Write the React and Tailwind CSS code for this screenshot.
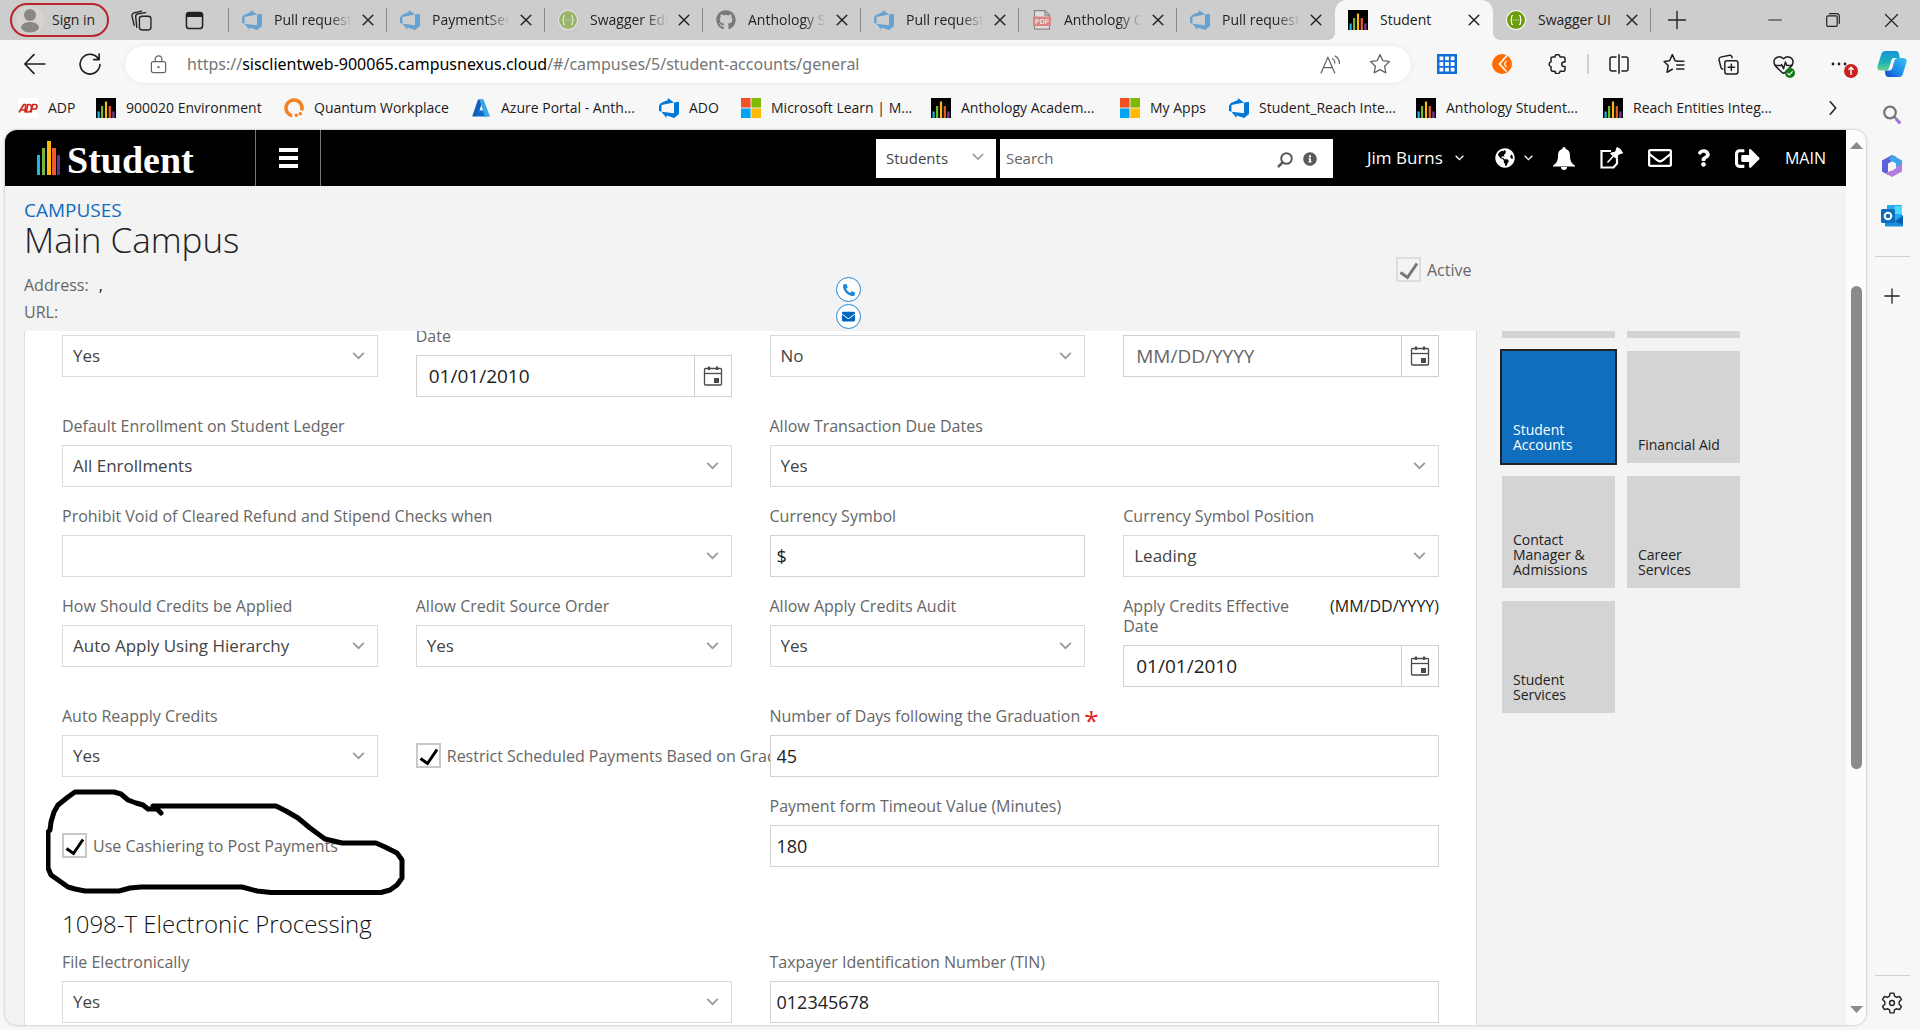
import { useId } from 'react';
import { FaGithub, FaGlobeAmericas, FaRegEnvelope, FaQuestion, FaSignOutAlt, FaInfoCircle, FaPhoneAlt, FaEnvelope } from 'react-icons/fa';
import { HeartPulse } from 'lucide-react';

/* ---------- Brand icons ---------- */

function DevOpsIcon() {
    return (
        <svg viewBox="0 0 24 24" className="h-5 w-5" fill="#0078d7">
            <path d="M0 8.877 2.247 5.91l8.405-3.416V.022l7.37 5.393L2.966 8.338v8.225L0 15.707zm24-4.45v14.651l-5.753 4.9-9.303-3.057v3.056l-5.978-7.416 15.057 1.798V5.415z" />
        </svg>
    );
}

function SwaggerIcon() {
    return (
        <svg viewBox="0 0 20 20" className="h-5 w-5">
            <circle cx="10" cy="10" r="10" fill="#fff" />
            <circle cx="10" cy="10" r="9" fill="#6a9c0c" />
            <path d="M7 5.5c-1.600 0-1.400 1-1.400 2.300S5 10 4.300 10c.7 0 1.300.6 1.300 2s-.2 2.500 1.400 2.500M13 5.500c1.600 0 1.400 1 1.400 2.300S15 10 15.700 10c-.7 0-1.300.6-1.300 2s.2 2.500-1.400 2.500" fill="none" stroke="#fff" strokeWidth="1.200" />
            <path d="M7.300 10h1M9.500 10h1M11.700 10h1" stroke="#fff" strokeWidth="1.200" />
        </svg>
    );
}

function GithubIcon() {
    return <FaGithub className="h-5 w-5 text-[#24292f]" />;
}

function PdfIcon() {
    return (
        <svg viewBox="0 0 20 20" className="h-5 w-5">
            <path d="M2.500.7h10.500l4.500 4.500v14h-15z" fill="#eee" stroke="#444" strokeWidth="1.200" />
            <path d="M13 .7v4.500h4.500" fill="none" stroke="#444" strokeWidth="1.200" />
            <rect x="1" y="6.500" width="18" height="9.500" rx="1" fill="#e8403c" />
            <text x="10" y="13.800" textAnchor="middle" fontSize="7" fontWeight="700" fill="#fff" fontFamily="Liberation Sans, sans-serif">PDF</text>
        </svg>
    );
}

function AnthologyIcon() {
    return (
        <svg viewBox="0 0 20 20" className="h-5 w-5">
            <rect width="20" height="20" fill="#000" />
            <rect x="1.500" y="13.500" width="2.200" height="6.500" fill="#1cb5ea" />
            <rect x="5" y="8" width="2.200" height="12" fill="#7ab827" />
            <rect x="8.900" y="3.500" width="2.200" height="16.500" fill="#fdb913" />
            <rect x="12.700" y="8" width="2.200" height="12" fill="#f15a24" />
            <rect x="16.300" y="13.500" width="2.200" height="6.500" fill="#7b3f98" />
        </svg>
    );
}

function AdpIcon() {
    return (
        <svg viewBox="0 0 20 20" className="h-5 w-5">
            <rect width="20" height="20" fill="#fff" />
            <g fill="none" stroke="#d0271d" strokeWidth="1.700" strokeLinejoin="round">
                <path d="M1 14.500 5.800 6.500h2L6.900 14.500M3.500 12h3.500" />
                <path d="M8.300 14 9.800 6.500h1.700c3 0 2.500 7.500-1.200 7.500z" />
                <path d="M13 14.500l1.700-8h2.600c2.600 0 2 4.500-.8 4.500h-1.800" />
            </g>
        </svg>
    );
}

function QuantumIcon() {
    return (
        <svg viewBox="0 0 20 20" className="h-5 w-5">
            <path d="M8.200 17.800A8 8 0 1 1 17.600 12.500" fill="none" stroke="#f58220" strokeWidth="3.600" />
            <circle cx="12.300" cy="17.300" r="1.700" fill="#f58220" />
            <circle cx="16.300" cy="15.800" r="1.800" fill="#f58220" />
        </svg>
    );
}

function AzureIcon() {
    return (
        <svg viewBox="0 0 20 20" className="h-5 w-5">
            <path d="M7 1.500h5L6.500 18.500H1.200z" fill="#0f5fb8" />
            <path d="M5 12.500h9l2 6H6.500z" fill="#0b6cc9" />
            <path d="M8.500 1.500h4L19 18.500h-5.300z" fill="#37a6ea" />
        </svg>
    );
}

function MicrosoftIcon() {
    return (
        <svg viewBox="0 0 20 20" className="h-5 w-5">
            <rect width="20" height="20" fill="#e8e8e8" />
            <rect width="9.500" height="9.500" fill="#f25022" />
            <rect x="10.500" width="9.500" height="9.500" fill="#7fba00" />
            <rect y="10.500" width="9.500" height="9.500" fill="#00a4ef" />
            <rect x="10.500" y="10.500" width="9.500" height="9.500" fill="#ffb900" />
        </svg>
    );
}

/* ---------- Line icons ---------- */

function Line({ size = 20, width = 1.4, className = '', children }) {
    return (
        <svg
            viewBox="0 0 20 20"
            width={size}
            height={size}
            fill="none"
            stroke="currentColor"
            strokeWidth={width}
            strokeLinecap="round"
            strokeLinejoin="round"
            className={className}
        >
            {children}
        </svg>
    );
}

function Chevron({ className }) {
    return (
        <svg viewBox="0 0 14 9" fill="none" stroke="currentColor" strokeWidth="2" className={className}>
            <path d="M1 1l6 6 6-6" />
        </svg>
    );
}

function CalendarIcon() {
    return (
        <svg viewBox="0 0 20 20" className="h-5 w-5" fill="none" stroke="#4a4a4a" strokeWidth="1.300">
            <rect x="1.500" y="2.500" width="17" height="16.500" rx="1" />
            <path d="M1.500 7.500h17" />
            <path d="M6 .5v3.500M14 .5v3.500" strokeWidth="2.200" />
            <rect x="11" y="12" width="5" height="5" fill="#4a4a4a" stroke="none" />
        </svg>
    );
}

/* ---------- Browser chrome ---------- */

const TABS = [
    { title: 'Pull request 12', icon: DevOpsIcon },
    { title: 'PaymentService', icon: DevOpsIcon },
    { title: 'Swagger Editor', icon: SwaggerIcon },
    { title: 'Anthology Stu', icon: GithubIcon },
    { title: 'Pull request 14', icon: DevOpsIcon },
    { title: 'Anthology Con', icon: PdfIcon },
    { title: 'Pull request 15', icon: DevOpsIcon },
    { title: 'Student', icon: AnthologyIcon, active: true },
    { title: 'Swagger UI', icon: SwaggerIcon, loaded: true },
];

function Tab({ title, icon: Icon, active, loaded, divider }) {
    const bright = active || loaded;
    return (
        <div className={`relative flex h-10 w-[158px] shrink-0 items-center pl-[13px] ${active ? 'rounded-t-xl bg-[#f7f7f7]' : ''}`}>
            {active && (
                <>
                    <span className="absolute -left-2 bottom-0 h-2 w-2 bg-[radial-gradient(circle_at_0_0,transparent_8px,#f7f7f7_8px)]" />
                    <span className="absolute -right-2 bottom-0 h-2 w-2 bg-[radial-gradient(circle_at_100%_0,transparent_8px,#f7f7f7_8px)]" />
                </>
            )}
            <span className={bright ? '' : 'opacity-50'}>
                <Icon />
            </span>
            <span
                className={`ml-3 w-[78px] overflow-hidden whitespace-nowrap text-sm ${bright ? '' : '[mask-image:linear-gradient(to_right,black_70%,transparent)]'}`}
            >
                {title}
            </span>
            <button className="ml-1.5 flex h-5 w-5 items-center justify-center" aria-label={`Close ${title}`}>
                <Line size={16} width={1.8}>
                    <path d="M4 4l12 12M16 4L4 16" />
                </Line>
            </button>
            {divider && <span className="absolute right-0 top-2 h-6 w-px bg-[#8c8c8c]" />}
        </div>
    );
}

function TabStrip() {
    return (
        <div className="flex h-10 shrink-0 items-center bg-[#cdcdcd]">
            <button className="ml-2.5 flex h-[34px] w-[99px] items-center gap-2 rounded-full border-2 border-[#b9252b] pl-1 text-sm">
                <svg viewBox="0 0 28 28" className="h-7 w-7">
                    <circle cx="14" cy="14" r="14" fill="#d6d3cd" />
                    <circle cx="14" cy="9" r="6" fill="#8a8784" />
                    <path d="M5 22c0-8 18-8 18 0-3 6-15 6-18 0z" fill="#8a8784" />
                </svg>
                Sign in
            </button>
            <button className="ml-[22px]" aria-label="Workspaces">
                <Line size={21} width={1.3}>
                    <rect x="8" y="6" width="11" height="13" rx="2.500" />
                    <path d="M5.500 16.500 4.500 6.500Q4.300 4 6.500 3.600L14 2.500" />
                    <path d="M3 14.500 1 6Q.6 3.500 2.800 2.800L10 1" />
                </Line>
            </button>
            <button className="ml-[33px]" aria-label="Tab actions">
                <Line size={19} width={1.6}>
                    <rect x="1.500" y="1.500" width="17" height="17" rx="3" />
                    <path d="M2 4h16M2 2.800h16M2 5.300h16" strokeWidth="2" />
                </Line>
            </button>
            <span className="ml-6 h-6 w-px bg-[#8c8c8c]" />
            {TABS.map((tab, i) => (
                <Tab key={i} {...tab} divider={!tab.active && i !== 6} />
            ))}
            <button className="ml-3.5 flex h-6 w-6 items-center justify-center" aria-label="New tab">
                <Line size={20}>
                    <path d="M10 1.500v17M1.500 10h17" />
                </Line>
            </button>
            <div className="ml-auto flex">
                <button className="flex h-10 w-[58px] items-center justify-center" aria-label="Minimize">
                    <Line size={14}>
                        <path d="M1 10h18" />
                    </Line>
                </button>
                <button className="flex h-10 w-[58px] items-center justify-center" aria-label="Restore">
                    <Line size={14} width={1.7}>
                        <rect x="1" y="4" width="15" height="15" rx="2" />
                        <path d="M5 1h10q4 0 4 4v10" />
                    </Line>
                </button>
                <button className="flex h-10 w-[58px] items-center justify-center" aria-label="Close window">
                    <Line size={15} width={1.6}>
                        <path d="M2 2l16 16M18 2L2 18" />
                    </Line>
                </button>
            </div>
        </div>
    );
}

function ToolButton({ label, children }) {
    return (
        <button className="relative flex h-10 w-[55px] shrink-0 items-center justify-center" aria-label={label}>
            {children}
        </button>
    );
}

function Toolbar() {
    return (
        <div className="flex h-12 items-center text-[#1f1f1f]">
            <button className="ml-6" aria-label="Back">
                <Line size={22} width={1.5}>
                    <path d="M1 10h18M9 1.500.8 10 9 18.500" />
                </Line>
            </button>
            <button className="ml-[33px] mr-6" aria-label="Refresh">
                <Line size={22} width={1.5}>
                    <path d="M18 6A9 9 0 1 0 19 10.500M18.300 1v5h-5" />
                </Line>
            </button>
            <div className="flex h-[37px] min-w-0 flex-1 items-center rounded-full bg-white pl-6 pr-5 text-[#666] shadow-[0_0_4px_rgba(0,0,0,0.080)]">
                <Line size={19} width={1.3} className="shrink-0">
                    <rect x="2.500" y="7" width="15" height="11.500" rx="2" />
                    <path d="M6.500 7V4.500a3.500 3.500 0 0 1 7 0V7" />
                    <circle cx="10" cy="12.700" r=".6" fill="currentColor" />
                </Line>
                <p className="ml-[19px] flex-1 overflow-hidden whitespace-nowrap font-['Noto_Sans',sans-serif] text-base text-[#767676]">
                    https://<span className="text-black">sisclientweb-900065.campusnexus.cloud</span>/#/campuses/5/student-accounts/general
                </p>
                <button className="mr-7" aria-label="Read aloud">
                    <Line size={21} width={1.2}>
                        <path d="M1 18 7.500 3 14 18M3.300 13h8.400M12 4.500c1.500.8 2.200 2.200 2.200 4M14.500 2c2.500 1.300 4 4 4 7" />
                    </Line>
                </button>
                <button aria-label="Add to favorites">
                    <Line size={22} width={1.2}>
                        <path d="M10 1.500l2.600 5.500 6 .8-4.400 4.200 1.100 6L10 15.100 4.700 18l1.100-6L1.400 7.800l6-.8z" />
                    </Line>
                </button>
            </div>
            <div className="ml-2 flex shrink-0 items-center">
                <ToolButton label="Apps">
                    <svg viewBox="0 0 20 20" className="h-5 w-5">
                        <rect width="20" height="20" fill="#0f6fd6" />
                        <g fill="#fff">
                            <path d="M2.500 2.500h3.800v3.800H2.500zM8.100 2.500h3.800v3.800H8.100zM13.700 2.500h3.800v3.800h-3.800zM2.500 8.100h3.800v3.800H2.500zM8.100 8.100h3.800v3.800H8.100zM13.700 8.100h3.800v3.800h-3.800zM2.500 13.700h3.800v3.800H2.500zM8.100 13.700h3.800v3.800H8.100zM13.700 13.700h3.800v3.800h-3.800z" />
                        </g>
                    </svg>
                </ToolButton>
                <ToolButton label="Postman">
                    <svg viewBox="0 0 20 20" className="h-5 w-5">
                        <circle cx="10" cy="10" r="10" fill="#ff6c00" />
                        <path d="M15 1.500 7.500 10l7 7.500" fill="none" stroke="#fff" strokeWidth="1.700" />
                        <path d="M14.500 7q-3.500 3 0 6" fill="none" stroke="#fff" strokeWidth="1.200" />
                    </svg>
                </ToolButton>
                <ToolButton label="Extensions">
                    <Line size={20} width={1.5}>
                        <path d="M8 3a2.500 2.500 0 0 1 5 0h3.500q1.500 0 1.500 1.500V8h-1a2.300 2.300 0 0 0 0 4.600h1v3.200q0 1.500-1.500 1.500H13a2.500 2.500 0 0 1-5 0H5.500Q4 17.300 4 15.800v-3a2.600 2.600 0 0 1 0-5V4.500Q4 3 5.500 3z" />
                    </Line>
                </ToolButton>
                <span className="ml-[3px] mr-0.5 h-5 w-0.5 bg-[#d0d0d0]" />
                <ToolButton label="Split screen">
                    <Line size={20} width={1.5}>
                        <path d="M10 .8v18.400M7 3H3Q1 3 1 5v10q0 2 2 2h4M13 3h4q2 0 2 2v10q0 2-2 2h-4" />
                    </Line>
                </ToolButton>
                <ToolButton label="Favorites">
                    <Line size={22}>
                        <path d="M13 7.500 11 7 8.500 1.500 6 7l-5 .7 3.700 3.700L3.700 17.500l4.800-2.700M13.500 7.500H19M12.500 11H19M12.500 14.500H19" />
                    </Line>
                </ToolButton>
                <ToolButton label="Collections">
                    <Line size={21}>
                        <rect x="6.500" y="6.500" width="12.500" height="12.500" rx="2" />
                        <path d="M12.700 9.700v6M9.700 12.700h6M4.500 14.500Q3 14 2.700 12.500L1 5.500Q.8 3.500 2.500 3L11 1.200q2-.2 2.500 2.300" />
                    </Line>
                </ToolButton>
                <ToolButton label="Browser essentials">
                    <HeartPulse size={23} strokeWidth={1.600} />
                    <svg viewBox="0 0 10 10" className="absolute right-4 top-6 h-2.5 w-2.5">
                        <circle cx="5" cy="5" r="5" fill="#0f7b10" />
                        <path d="M2.500 5.200l1.800 1.800 3.400-3.600" fill="none" stroke="#fff" strokeWidth="1.200" />
                    </svg>
                </ToolButton>
                <ToolButton label="Settings and more">
                    <svg viewBox="0 0 16 4" className="h-1 w-4" fill="#1f1f1f">
                        <circle cx="2" cy="2" r="1.400" />
                        <circle cx="8" cy="2" r="1.400" />
                        <circle cx="14" cy="2" r="1.400" />
                    </svg>
                    <svg viewBox="0 0 14 14" className="absolute right-2 top-5 h-3.5 w-3.5">
                        <circle cx="7" cy="7" r="7" fill="#c9211e" />
                        <path d="M7 11V3.500M4.500 5.800 7 3.300l2.500 2.500" fill="none" stroke="#fff" strokeWidth="1.400" />
                    </svg>
                </ToolButton>
            </div>
        </div>
    );
}

const BOOKMARKS = [
    { label: 'ADP', icon: AdpIcon, width: 'w-[78px]' },
    { label: '900020 Environment', icon: AnthologyIcon, width: 'w-[188px]' },
    { label: 'Quantum Workplace', icon: QuantumIcon, width: 'w-[187px]' },
    { label: 'Azure Portal - Anth...', icon: AzureIcon, width: 'w-[188px]' },
    { label: 'ADO', icon: DevOpsIcon, width: 'w-[82px]' },
    { label: 'Microsoft Learn | M...', icon: MicrosoftIcon, width: 'w-[190px]' },
    { label: 'Anthology Academ...', icon: AnthologyIcon, width: 'w-[189px]' },
    { label: 'My Apps', icon: MicrosoftIcon, width: 'w-[109px]' },
    { label: 'Student_Reach Inte...', icon: DevOpsIcon, width: 'w-[187px]' },
    { label: 'Anthology Student...', icon: AnthologyIcon, width: 'w-[187px]' },
    { label: 'Reach Entities Integ...', icon: AnthologyIcon, width: 'w-[187px]' },
];

function BookmarksBar() {
    return (
        <nav className="flex h-[42px] items-center pb-0.5 pl-[18px]">
            {BOOKMARKS.map(({ label, icon: Icon, width }, i) => (
                <a key={i} href="#" className={`flex shrink-0 items-center gap-2.5 whitespace-nowrap text-sm text-[#1b1b1b] ${width}`}>
                    <Icon />
                    {label}
                </a>
            ))}
            <button className="ml-auto mr-6" aria-label="More bookmarks">
                <Line size={18} width={1.7}>
                    <path d="M7 3l6 7-6 7" />
                </Line>
            </button>
        </nav>
    );
}

function EdgeSidebar() {
    return (
        <aside className="flex w-[54px] shrink-0 flex-col items-center pb-4 pr-0.5">
            <button className="flex h-12 items-center" aria-label="Copilot">
                <svg viewBox="0 0 30 28" className="h-7 w-[30px]">
                    <defs>
                        <linearGradient id="cp1" x1="0" y1="0" x2="0" y2="1">
                            <stop offset="0" stopColor="#1694d8" />
                            <stop offset=".6" stopColor="#1fb3b8" />
                            <stop offset="1" stopColor="#6fd08a" />
                        </linearGradient>
                        <linearGradient id="cp2" x1="1" y1="0" x2="0" y2="1">
                            <stop offset="0" stopColor="#35c5f2" />
                            <stop offset=".6" stopColor="#1c86ea" />
                            <stop offset="1" stopColor="#1743c4" />
                        </linearGradient>
                    </defs>
                    <path d="M8 1h11q2.500 0 3 3l.8 4H17q-2 0-2.600 2L12 18q-.8 2.500-3 2.500H3Q-.5 20 .6 16L4.500 3.500Q5.300 1 8 1z" fill="url(#cp1)" />
                    <path d="M21 8h5q4.500.3 3.500 4L25.700 24.500Q25 27 22 27H11.500Q9 27 8.300 24L7.800 20.500H12q2.600 0 3.400-2.500l2.300-8Q18.500 8 21 8z" fill="url(#cp2)" />
                </svg>
            </button>
            <button className="mt-4 flex h-[22px] items-center" aria-label="Search">
                <svg viewBox="0 0 20 20" className="h-5 w-5" fill="none">
                    <circle cx="8" cy="7.500" r="5.800" stroke="#777" strokeWidth="2.200" />
                    <path d="M12.500 12l2 2" stroke="#777" strokeWidth="2.200" />
                    <path d="M14.200 14l4 4.500" stroke="#a374d5" strokeWidth="3.200" />
                </svg>
            </button>
            <button className="mt-[29px]" aria-label="Microsoft 365">
                <svg viewBox="0 0 22 22" className="h-[22px] w-[22px]">
                    <path d="M11 0 1 5.500v11L7 20V9l4.500-3 4-4z" fill="#5b62d8" />
                    <path d="M11 0l10 5.500v10L15 12V8.500L7.500 4.500z" fill="#3fa5ea" />
                    <path d="M21 8v8.500L11 22l-7-4 7-2.500 4-3z" fill="#b57be0" />
                    <path d="M11 6.500l4 2.200v4.600l-4 2.200-4-2.200V8.700z" fill="#f7f7f7" />
                </svg>
            </button>
            <button className="mt-7" aria-label="Outlook">
                <svg viewBox="0 0 22 22" className="h-[22px] w-[22px]">
                    <rect x="6" y="0" width="15" height="18" rx="1" fill="#28a8ea" />
                    <rect x="13.500" y="1" width="7.500" height="8" fill="#50d9ff" />
                    <path d="M4 21.500V13l9 3 9-6v10.500q0 1-1 1z" fill="#1490df" />
                    <path d="M14 16.500 22 11v9z" fill="#0a5fb0" />
                    <rect x="0" y="4" width="14" height="14" rx="1.500" fill="#0f6cbd" />
                    <circle cx="7" cy="11" r="3.300" fill="none" stroke="#fff" strokeWidth="2" />
                </svg>
            </button>
            <span className="mt-[29px] h-px w-[35px] bg-[#d0d0d0]" />
            <button className="mt-[31px]" aria-label="Customize sidebar">
                <Line size={16} width={1.6}>
                    <path d="M10 1v18M1 10h18" />
                </Line>
            </button>
            <span className="mt-auto h-px w-[35px] bg-[#d0d0d0]" />
            <button className="mt-4" aria-label="Settings">
                <Line size={22} width={1.3}>
                    <path d="M8.300 1h3.400l.6 2.700 1.900 1.100 2.700-.8 1.700 2.900-2.100 1.900v2.400l2.100 1.900-1.700 2.900-2.700-.8-1.900 1.100-.6 2.700H8.300l-.6-2.700-1.900-1.100-2.700.8-1.700-2.900 2.100-1.900V8.800L1.400 6.900 3.100 4l2.700.8 1.900-1.100z" />
                    <circle cx="10" cy="10" r="2.200" />
                </Line>
            </button>
        </aside>
    );
}

/* ---------- Application ---------- */

function AppHeader() {
    return (
        <header className="flex h-14 shrink-0 bg-black text-white">
            <a href="#" className="flex w-[250px] items-center gap-1.5 pl-8" aria-label="Student home">
                <svg viewBox="0 0 24 34" className="h-[34px] w-6">
                    <rect x="0" y="14" width="3" height="20" fill="#1cb5ea" />
                    <rect x="5" y="7" width="3" height="27" fill="#7ab83a" />
                    <rect x="10" y="0" width="4" height="34" fill="#fdb913" />
                    <rect x="15" y="7" width="4" height="27" fill="#f15a29" />
                    <rect x="20" y="14" width="3" height="20" fill="#662d91" />
                </svg>
                <span className="pt-1 font-['Liberation_Serif',serif] text-[38px] font-bold leading-[38px]">Student</span>
            </a>
            <button className="flex w-[66px] items-center justify-center border-x border-[#777]" aria-label="Menu">
                <svg viewBox="0 0 19 20" className="h-5 w-[19px]" fill="#fff">
                    <path d="M0 0h19v4H0zM0 8h19v4H0zM0 16h19v4H0z" />
                </svg>
            </button>
            <div className="ml-auto flex items-center pr-5">
                <div className="relative flex items-center text-[#444]">
                    <select aria-label="Search category" className="h-[39px] w-[120px] appearance-none bg-white pl-2.5 text-[15px]">
                        <option>Students</option>
                    </select>
                    <Chevron className="pointer-events-none absolute right-3 top-3.5 h-2 w-3 text-[#999]" />
                </div>
                <div className="ml-1 flex h-[39px] w-[333px] items-center bg-white pl-1.5 pr-4 text-[#5a5a5a]">
                    <input aria-label="Search" placeholder="Search" className="min-w-0 flex-1 text-[15px] outline-none placeholder:text-[#666]" />
                    <button aria-label="Run search">
                        <svg viewBox="0 0 16 16" className="mt-1 h-4 w-4" fill="none" stroke="currentColor" strokeWidth="2">
                            <circle cx="9.500" cy="6.500" r="5.300" />
                            <path d="M5.500 10.500 1 15" strokeWidth="2.500" />
                        </svg>
                    </button>
                    <button className="ml-2.5" aria-label="Search help">
                        <FaInfoCircle className="mt-0.5 h-3.5 w-3.5" />
                    </button>
                </div>
                <button className="ml-[34px] flex w-[97px] items-center justify-between whitespace-nowrap text-[17px]">
                    Jim Burns
                    <Chevron className="h-[6px] w-[9px]" />
                </button>
                <button className="ml-[31px] flex w-[38px] items-center justify-between" aria-label="Language">
                    <FaGlobeAmericas className="h-5 w-5" />
                    <Chevron className="h-[6px] w-[9px]" />
                </button>
                <div className="ml-5 flex items-center gap-[25px]">
                    <button aria-label="Notifications">
                        <svg viewBox="0 0 22 23" className="h-[23px] w-[22px]" fill="#fff">
                            <path d="M11 0q1.700 0 1.700 2C16 2.800 17 5.500 17 9c0 5 1.800 7.500 5 9.500v1H0v-1C3.200 16.500 5 14 5 9c0-3.500 1-6.200 4.300-7Q9.300 0 11 0z" />
                            <path d="M8 20h6q0 3-3 3t-3-3z" />
                        </svg>
                    </button>
                    <button aria-label="Pinned notes">
                        <svg viewBox="0 0 23 22" className="h-[22px] w-[23px]" fill="none" stroke="#fff">
                            <path d="M11 4H1.500v16.500h12l3.500-4V12" strokeWidth="2.200" />
                            <path d="M7.500 15.500l6-6.500" strokeWidth="1.600" />
                            <path d="M10.500 6.500 17 12q1-2 .5-3.500L20 6.500q1.500.3 2.500-.5Q21 1.500 17 .5q-1 1-.5 2.500l-2 2.500q-2-.5-4 1z" fill="#fff" />
                        </svg>
                    </button>
                    <button aria-label="Messages">
                        <FaRegEnvelope className="h-6 w-6" />
                    </button>
                    <button aria-label="Help">
                        <FaQuestion className="h-5 w-[13px]" />
                    </button>
                    <button aria-label="Sign out">
                        <FaSignOutAlt className="h-[25px] w-[25px]" />
                    </button>
                    <a href="#" className="text-base">MAIN</a>
                </div>
            </div>
        </header>
    );
}

function Checkbox({ label, muted }) {
    const id = useId();
    return (
        <div className="flex items-center gap-1.5 whitespace-nowrap">
            <span className="relative h-[25px] w-[25px] shrink-0">
                <input
                    id={id}
                    type="checkbox"
                    defaultChecked
                    disabled={muted}
                    className={`block h-[25px] w-[25px] appearance-none border-2 ${muted ? 'border-[#ddd]' : 'border-[#c8c8c8] bg-white'}`}
                />
                <svg viewBox="0 0 25 25" className="pointer-events-none absolute inset-0 h-[25px] w-[25px]" fill="none" stroke={muted ? '#777' : '#000'} strokeWidth="3">
                    <path d="M4.500 15.500l7 5L21 6.500" />
                </svg>
            </span>
            <label htmlFor={id} className="text-base leading-5 text-[#666]">{label}</label>
        </div>
    );
}

function CampusHeader() {
    return (
        <div className="grid shrink-0 grid-cols-[812fr_560fr_450fr] pl-[19px]">
            <div className="pb-[5px] pt-3.5 text-[#666]">
                <a href="#" className="block text-[19px] leading-5 text-[#0f6cbf]">CAMPUSES</a>
                <h1 className="text-[35px] font-light leading-10 text-[#222]">Main Campus</h1>
                <p className="mt-3 leading-[27px]">
                    Address: <span className="ml-1.5 text-[#222]">,</span>
                </p>
                <p className="leading-[27px]">URL:</p>
            </div>
            <div className="flex flex-col gap-0.5 pt-[91px]">
                <button className="flex h-[25px] w-[25px] items-center justify-center rounded-full border border-[#1e88d8] bg-white" aria-label="Call">
                    <FaPhoneAlt className="h-3 w-3 text-[#1a86dc]" />
                </button>
                <button className="flex h-[25px] w-[25px] items-center justify-center rounded-full border border-[#1e88d8] bg-white" aria-label="Email">
                    <FaEnvelope className="h-[13px] w-[13px] text-[#0067be]" />
                </button>
            </div>
            <div className="pt-[71px]">
                <Checkbox label="Active" muted />
            </div>
        </div>
    );
}

function Field({ id, label, hiddenLabel, hint, required, className = '', children }) {
    return (
        <div className={`min-w-0 ${className}`}>
            <div className="mb-[9px] flex justify-between text-base leading-5">
                <label htmlFor={id} className={hiddenLabel ? 'sr-only' : 'flex text-[#666]'}>
                    {label}
                    {required && <span className="ml-1 h-5 text-[26px] leading-7 text-[#e31b23]">*</span>}
                </label>
                {hint && <span className="ml-6 text-[#222]">{hint}</span>}
            </div>
            {children}
        </div>
    );
}

function SelectField({ value, ...props }) {
    const id = useId();
    return (
        <Field id={id} {...props}>
            <div className="relative">
                <select id={id} className="block h-[42px] w-full appearance-none border border-[#d9d9d9] bg-white px-2.5 text-[17px] text-[#444]">
                    <option>{value}</option>
                </select>
                <Chevron className="pointer-events-none absolute right-[13px] top-[17px] h-2 w-[13px] text-[#999]" />
            </div>
        </Field>
    );
}

function TextField({ value, ...props }) {
    const id = useId();
    return (
        <Field id={id} {...props}>
            <input id={id} defaultValue={value} className="block h-[42px] w-full border border-[#d3d3d3] bg-white px-1.5 text-[18px] text-[#222]" />
        </Field>
    );
}

function DateField({ value, ...props }) {
    const id = useId();
    return (
        <Field id={id} {...props}>
            <div className="flex h-[42px] border border-[#d0d0d0] bg-white">
                <input
                    id={id}
                    defaultValue={value}
                    placeholder="MM/DD/YYYY"
                    className="min-w-0 flex-1 px-3 text-[19px] text-[#222] placeholder:text-[#666]"
                />
                <button className="flex w-[37px] items-center justify-center border-l border-[#d0d0d0]" aria-label="Open calendar">
                    <CalendarIcon />
                </button>
            </div>
        </Field>
    );
}

// Freehand ring drawn around the cashiering option
function InkMark() {
    return (
        <svg
            viewBox="46 785 360 110"
            className="pointer-events-none absolute -left-4 -top-12 h-[110px] w-[360px]"
            fill="none"
            stroke="#000"
            strokeWidth="5"
            strokeLinecap="round"
            strokeLinejoin="round"
        >
            <path d="M161 813 157 809 148 809 143 805 136 803 128 800 121 794 114 792H75L68 797 58 805 54 812 51 822 50 830 48 832V868L51 875 61 882 68 887 75 889 85 891H119L130 888 141 887H242L257 891 271 892.500H381L390 890 397 885 402 878V860L397 853 385 847 376 843H342L325 839 310 828 298 818 286 811 276 806H153" />
        </svg>
    );
}

function SettingsForm() {
    return (
        <main className="min-w-0 flex-1 overflow-hidden border-x border-[#ddd] bg-white px-[37px]">
            <div className="-mt-[5px] grid grid-cols-4 gap-x-[38px] gap-y-[19px]">
                <SelectField label="Post Payments" hiddenLabel value="Yes" />
                <DateField label="Date" value="01/01/2010" />
                <SelectField label="Use Effective Date" hiddenLabel value="No" />
                <DateField label="End Date" hiddenLabel />

                <SelectField className="col-span-2" label="Default Enrollment on Student Ledger" value="All Enrollments" />
                <SelectField className="col-span-2" label="Allow Transaction Due Dates" value="Yes" />

                <SelectField className="col-span-2" label="Prohibit Void of Cleared Refund and Stipend Checks when" value="" />
                <TextField label="Currency Symbol" value="$" />
                <SelectField label="Currency Symbol Position" value="Leading" />

                <SelectField label="How Should Credits be Applied" value="Auto Apply Using Hierarchy" />
                <SelectField label="Allow Credit Source Order" value="Yes" />
                <SelectField label="Allow Apply Credits Audit" value="Yes" />
                <DateField label="Apply Credits Effective Date" hint="(MM/DD/YYYY)" value="01/01/2010" />

                <SelectField label="Auto Reapply Credits" value="Yes" />
                <div className="min-w-0 self-end pb-[9px]">
                    <Checkbox label="Restrict Scheduled Payments Based on Graduation" />
                </div>
                <TextField className="col-span-2" label="Number of Days following the Graduation" required value="45" />

                <div className="relative col-span-2 self-end pb-[9px]">
                    <Checkbox label="Use Cashiering to Post Payments" />
                    <InkMark />
                </div>
                <TextField className="col-span-2" label="Payment form Timeout Value (Minutes)" value="180" />
            </div>
            <h2 className="mb-3 mt-[41px] text-2xl font-light leading-8 text-[#111]">1098-T Electronic Processing</h2>
            <div className="grid grid-cols-4 gap-x-[38px]">
                <SelectField className="col-span-2" label="File Electronically" value="Yes" />
                <TextField className="col-span-2" label="Taxpayer Identification Number (TIN)" value="012345678" />
            </div>
        </main>
    );
}

const TILES = [
    { label: 'Student Accounts', active: true },
    { label: 'Financial Aid' },
    { label: 'Contact Manager & Admissions' },
    { label: 'Career Services' },
    { label: 'Student Services' },
];

function TileMenu() {
    return (
        <nav className="w-[369px] shrink-0 pl-[25px]">
            <div className="grid grid-cols-[113px_113px] gap-x-3 gap-y-[13px]">
                <span className="h-[7px] bg-[#d4d4d4]" />
                <span className="h-[7px] bg-[#d4d4d4]" />
                {TILES.map(({ label, active }) => (
                    <a
                        key={label}
                        href="#"
                        className={`flex h-28 items-end px-[11px] pb-[11px] text-sm leading-[15px] ${active ? 'bg-[#106ebe] text-white outline-2 outline-[#222]' : 'bg-[#d4d4d4] text-[#222]'}`}
                    >
                        {label}
                    </a>
                ))}
            </div>
        </nav>
    );
}

function ScrollTrack() {
    return (
        <div className="flex w-5 shrink-0 flex-col items-center bg-[#fcfcfc] py-3 text-[#8b8b8b]">
            <svg viewBox="0 0 13 7" className="h-[7px] w-[13px] shrink-0" fill="currentColor">
                <path d="M6.500 0 13 7H0z" />
            </svg>
            <span className="grow-[137]" />
            <span className="w-[11px] grow-[483] rounded-full bg-[#8b8b8b]" />
            <span className="grow-[237]" />
            <svg viewBox="0 0 13 7" className="h-[7px] w-[13px] shrink-0" fill="currentColor">
                <path d="M0 0h13L6.500 7z" />
            </svg>
        </div>
    );
}

export default function App() {
    return (
        <div className="flex h-screen flex-col overflow-hidden bg-[#f7f7f7] font-['Open_Sans',sans-serif] text-base text-[#222]">
            <TabStrip />
            <div className="flex min-h-0 flex-1">
                <div className="flex min-w-0 flex-1 flex-col pb-[5px]">
                    <Toolbar />
                    <BookmarksBar />
                    <div className="ml-[5px] flex min-h-0 flex-1 overflow-hidden rounded-xl bg-[#f3f3f3] shadow-[0_0_3px_rgba(0,0,0,0.300)]">
                        <div className="flex min-w-0 flex-1 flex-col">
                            <AppHeader />
                            <CampusHeader />
                            <div className="flex min-h-0 flex-1 overflow-hidden pl-[19px]">
                                <SettingsForm />
                                <TileMenu />
                            </div>
                        </div>
                        <ScrollTrack />
                    </div>
                </div>
                <EdgeSidebar />
            </div>
        </div>
    );
}
